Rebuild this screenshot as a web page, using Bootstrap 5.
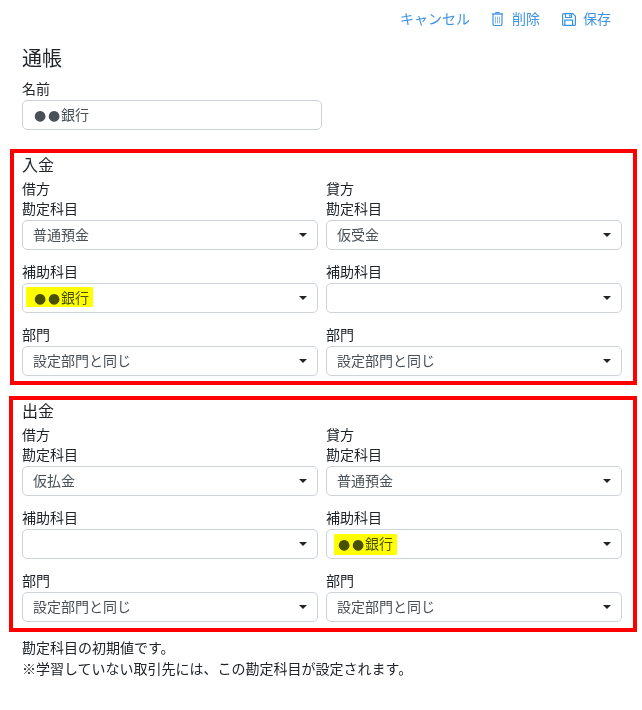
<!DOCTYPE html>
<html lang="ja">
<head>
<meta charset="utf-8">
<title>通帳</title>
<link href="https://cdn.jsdelivr.net/npm/bootstrap@5.3.0/dist/css/bootstrap.min.css" rel="stylesheet">
<style>
body{font-family:"Noto Sans CJK JP","Liberation Sans",sans-serif;font-size:14px;line-height:21px;color:#212529;background:#fff;width:642px;height:710px;overflow:hidden}
.tool-bar{height:39px;padding:0 31px 2px 0;gap:21px}
.tool-link{color:#3d93e3;text-decoration:none;gap:7px}
.page-pad{padding-left:22px}
.page-title{font-size:20px;line-height:28px;height:30px;margin:5px 0 5px;font-weight:400}
.fld-label{display:block;margin:0;line-height:19px;height:21px}
.fld-label.side-label{line-height:21px}
.name-input{width:300px;height:30px;font-size:14px;line-height:20px;padding:3px 10px 0;color:#495057;border-color:#ced4da;border-radius:5px}
.red-frame{border:4px solid #f00;width:628px}
.frame-one{margin:19px 0 0 10px;width:627px;padding:0 11px 5px 8px}
.frame-two{margin:11px 0 0 9px;padding:0 11px 6px 9px}
.frame-title{font-size:16px;line-height:23px;height:25px;margin:0;font-weight:400}
.frame-two .frame-title{line-height:20px;height:24px}
.pick-wrap{position:relative;margin-bottom:12px}
.pick-wrap.pick-last{margin-bottom:0}
.pick{height:30px;font-size:14px;line-height:20px;padding:0 24px 2px 10px;color:#495057;border-color:#ced4da;border-radius:5px;background-image:url("data:image/svg+xml,%3Csvg xmlns='http://www.w3.org/2000/svg' width='8' height='4'%3E%3Cpath d='M0 0h8L4 4z' fill='%23212529'/%3E%3C/svg%3E");background-size:8px 4px;background-position:right 10px center}
div.pick{padding-top:3px;padding-bottom:0}
.round-dot{display:inline-block;width:14px;text-align:center;font-family:"DejaVu Sans",sans-serif}
.hl{position:absolute;background:#ff0;mix-blend-mode:multiply;pointer-events:none}
.hl-left{left:4px;top:4px;width:67px;height:20px}
.hl-right{left:8px;top:5px;width:63px;height:21px}
.foot-note{margin:5px 0 0}
</style>
</head>
<body>
<div class="tool-bar d-flex justify-content-end align-items-center">
  <a class="tool-link" href="#">キャンセル</a>
  <a class="tool-link d-flex align-items-center" href="#">
    <svg width="14" height="15" viewBox="0 0 14 15" fill="none" stroke="#3d93e3"><path d="M4.500 2.500V1.500h4v1" /><path d="M1 3h11" stroke-width="1.400"/><path d="M2 3.500v9.500a1.500 1.500 0 0 0 1.500 1.500h6A1.500 1.500 0 0 0 11 13V3.500" stroke-width="1.200"/><path d="M4.500 5.500v7M6.500 5.500v7M8.500 5.500v7" stroke-opacity=".6"/></svg>削除</a>
  <a class="tool-link d-flex align-items-center" href="#">
    <svg width="15" height="15" viewBox="0 0 15 15" fill="none" stroke="#3d93e3" stroke-width="1.200"><path d="M1.600 3.700a1 1 0 0 1 1-1h9.300l2.500 2.500v8.200a1 1 0 0 1-1 1H2.600a1 1 0 0 1-1-1z"/><path d="M4.500 2.700v3.800h6V2.700M3.800 14.400V9.200h7.800v5.200"/><path d="M8.800 3.500v2" stroke-width="1.400"/></svg>保存</a>
</div>
<div class="page-pad">
  <h1 class="page-title">通帳</h1>
  <div class="fld-label">名前</div>
  <div class="form-control name-input"><span class="round-dot">●</span><span class="round-dot">●</span>銀行</div>
</div>
<section class="red-frame frame-one">
  <h2 class="frame-title">入金</h2>
  <div class="row gx-2">
    <div class="col-6">
      <div class="fld-label side-label">借方</div>
      <div class="fld-label">勘定科目</div>
      <div class="pick-wrap"><select class="form-select pick"><option>普通預金</option></select></div>
      <div class="fld-label">補助科目</div>
      <div class="pick-wrap"><div class="form-select pick"><span class="round-dot">●</span><span class="round-dot">●</span>銀行</div><span class="hl hl-left"></span></div>
      <div class="fld-label">部門</div>
      <div class="pick-wrap pick-last"><select class="form-select pick"><option>設定部門と同じ</option></select></div>
    </div>
    <div class="col-6">
      <div class="fld-label side-label">貸方</div>
      <div class="fld-label">勘定科目</div>
      <div class="pick-wrap"><select class="form-select pick"><option>仮受金</option></select></div>
      <div class="fld-label">補助科目</div>
      <div class="pick-wrap"><select class="form-select pick"><option></option></select></div>
      <div class="fld-label">部門</div>
      <div class="pick-wrap pick-last"><select class="form-select pick"><option>設定部門と同じ</option></select></div>
    </div>
  </div>
</section>
<section class="red-frame frame-two">
  <h2 class="frame-title">出金</h2>
  <div class="row gx-2">
    <div class="col-6">
      <div class="fld-label side-label">借方</div>
      <div class="fld-label">勘定科目</div>
      <div class="pick-wrap"><select class="form-select pick"><option>仮払金</option></select></div>
      <div class="fld-label">補助科目</div>
      <div class="pick-wrap"><select class="form-select pick"><option></option></select></div>
      <div class="fld-label">部門</div>
      <div class="pick-wrap pick-last"><select class="form-select pick"><option>設定部門と同じ</option></select></div>
    </div>
    <div class="col-6">
      <div class="fld-label side-label">貸方</div>
      <div class="fld-label">勘定科目</div>
      <div class="pick-wrap"><select class="form-select pick"><option>普通預金</option></select></div>
      <div class="fld-label">補助科目</div>
      <div class="pick-wrap"><div class="form-select pick"><span class="round-dot">●</span><span class="round-dot">●</span>銀行</div><span class="hl hl-right"></span></div>
      <div class="fld-label">部門</div>
      <div class="pick-wrap pick-last"><select class="form-select pick"><option>設定部門と同じ</option></select></div>
    </div>
  </div>
</section>
<div class="page-pad foot-note">勘定科目の初期値です。<br>※学習していない取引先には、この勘定科目が設定されます。</div>
</body>
</html>
